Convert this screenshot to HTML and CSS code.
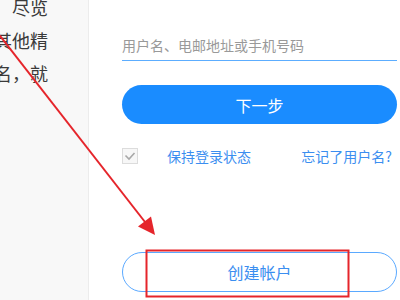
FILE: index.html
```html
<!DOCTYPE html>
<html lang="zh-CN">
<head>
<meta charset="utf-8">
<title>登录</title>
<link rel="stylesheet" href="styles.css">
</head>
<body>
<div class="page">
  <aside class="side">
    <div class="side-text">
      <p class="line">尽览</p>
      <p class="line">以及其他精</p>
      <p class="line">户名，就</p>
    </div>
  </aside>
  <main class="main">
    <div class="field"><span class="placeholder">用户名、电邮地址或手机号码</span></div>
    <div class="btn-primary">下一步</div>
    <div class="check-row">
      <span class="checkbox">
        <svg width="16" height="16" viewBox="0 0 16 16"><polyline points="3.5,7.5 7,11 12.5,5" fill="none" stroke="#a8a8a8" stroke-width="1.6"/></svg>
      </span>
      <span class="link keep">保持登录状态</span>
      <span class="link forgot">忘记了用户名?</span>
    </div>
    <div class="btn-outline">创建帐户</div>
  </main>
</div>
<svg class="annot" width="400" height="300" viewBox="0 0 400 300">
  <line x1="-28" y1="0" x2="145" y2="222" stroke="#e5252b" stroke-width="2"/>
  <polygon points="155,235 138,226.5 151,216.5" fill="#e5252b"/>
  <rect x="146.5" y="250.5" width="202" height="46" fill="none" stroke="#e5252b" stroke-width="2"/>
</svg>
</body>
</html>
```
FILE: styles.css
```css
html, body {
  margin: 0;
  padding: 0;
}
body {
  width: 400px;
  height: 300px;
  overflow: hidden;
  position: relative;
  background: #ffffff;
  font-family: "Noto Sans CJK SC", "Noto Sans", sans-serif;
}
.page {
  display: flex;
  height: 300px;
}
.side {
  width: 88px;
  flex: none;
  background: #f8f8f8;
  border-right: 1px solid #ececec;
  overflow: hidden;
}
.side-text {
  margin-top: -9px;
  padding-right: 40px;
  text-align: right;
  color: #3a3a3a;
  font-size: 18px;
  line-height: 33px;
}
.line {
  margin: 0;
  white-space: nowrap;
  direction: rtl;
  overflow: hidden;
}
.main {
  padding-left: 33px;
  width: 275px;
  flex: none;
  display: flex;
  flex-direction: column;
}
.field {
  margin-top: 30px;
  height: 30px;
  border-bottom: 1px solid #5cadff;
  line-height: 30px;
  font-size: 14px;
  color: #999999;
}
.btn-primary {
  margin-top: 24px;
  height: 39px;
  border-radius: 20px;
  background: #1a8cff;
  color: #ffffff;
  font-size: 16px;
  line-height: 41px;
  text-align: center;
}
.check-row {
  margin-top: 24px;
  height: 16px;
  display: flex;
  align-items: center;
  font-size: 14px;
}
.checkbox {
  width: 14px;
  height: 14px;
  border: 1px solid #dcdcdc;
  background: #f7f7f7;
  display: flex;
  align-items: center;
  justify-content: center;
  flex: none;
}
.checkbox svg {
  display: block;
  flex: none;
}
.link {
  color: #3b8ef0;
  line-height: 16px;
}
.keep {
  margin-left: 29px;
}
.forgot {
  margin-left: auto;
  margin-right: 5px;
}
.btn-outline {
  margin-top: 88px;
  height: 38px;
  border: 1px solid #5aa9ff;
  border-radius: 20px;
  color: #3b8ef0;
  font-size: 16px;
  line-height: 38px;
  text-align: center;
}
.annot {
  position: absolute;
  left: 0;
  top: 0;
  pointer-events: none;
}
```
